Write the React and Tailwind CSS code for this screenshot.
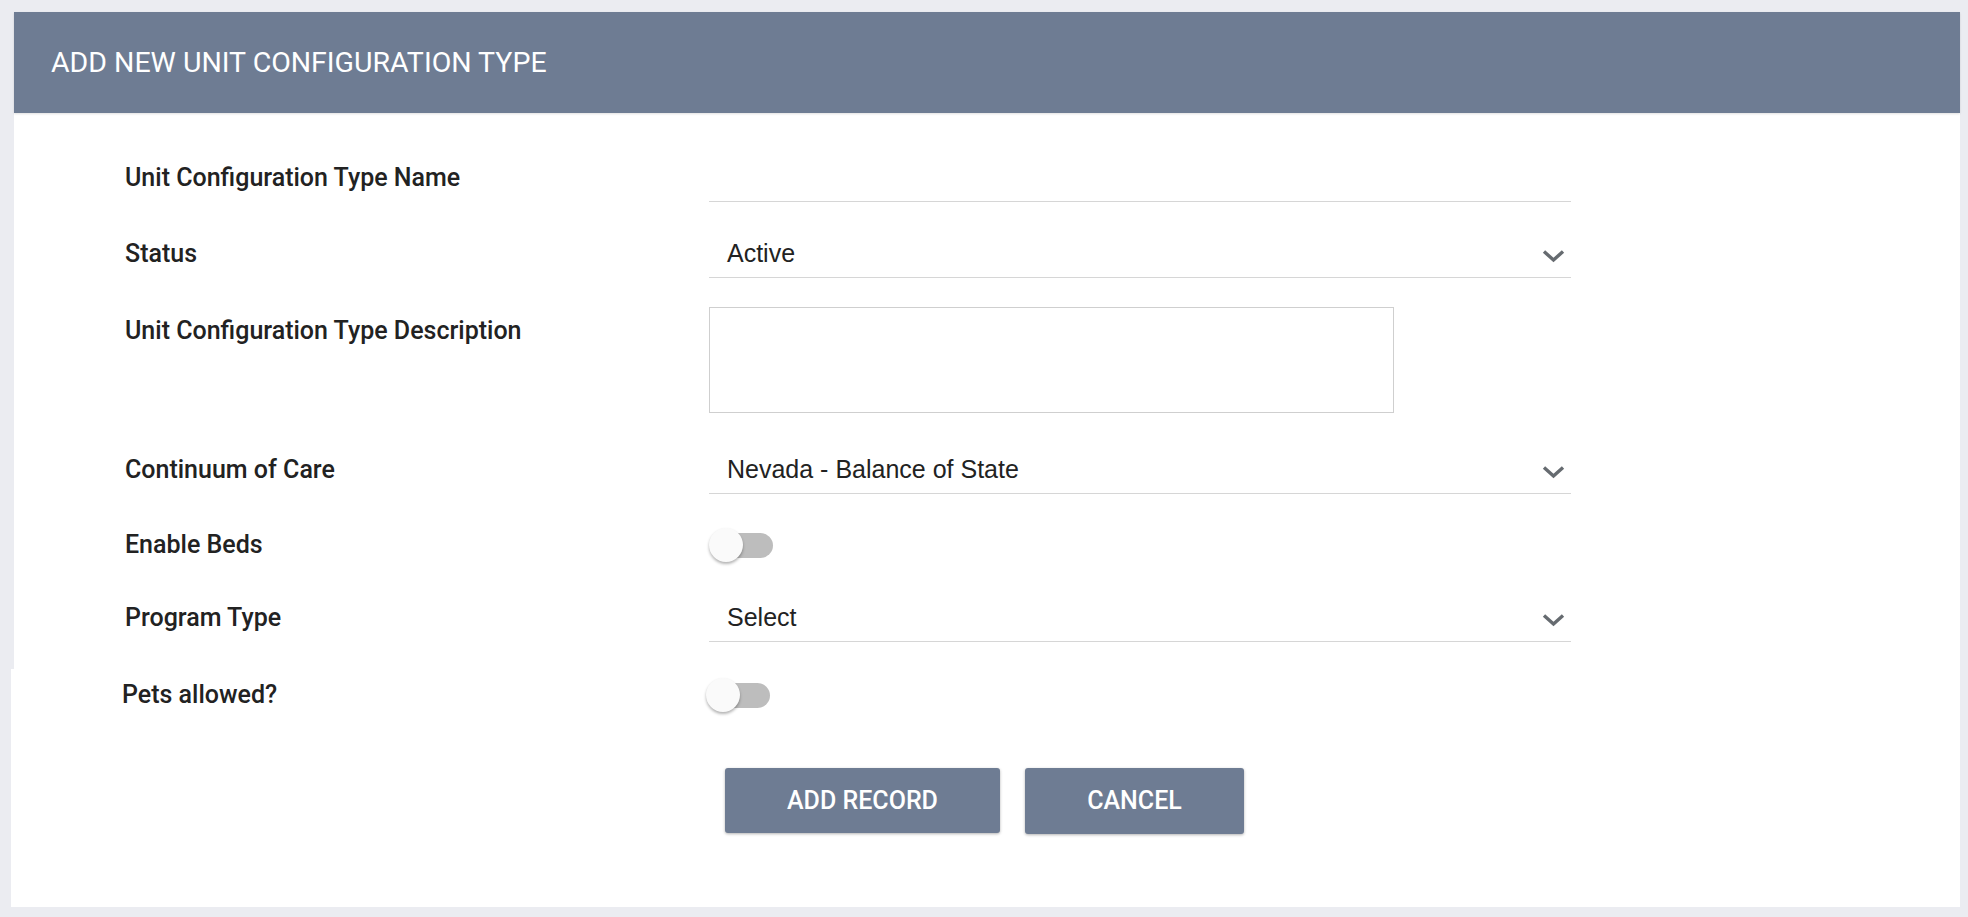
import React, { useState } from 'react';

const LABEL = "font-['Roboto',sans-serif] text-[25px] font-medium text-[#222222] leading-[30px]";
const VALUE = "font-['Liberation_Sans',Arial,sans-serif] text-[25px] text-[#222222] leading-[29px]";

const Chevron = () => (
  <svg width="23" height="14" viewBox="0 0 23 14" className="mt-[6px] shrink-0">
    <path d="M2 2.5 L11.5 11 L21 2.5" fill="none" stroke="#666b70" strokeWidth="3.4" />
  </svg>
);

const SelectField = ({ value }) => (
  <div className="h-[49px] w-[862px] border-b border-[#d6d6d6] flex items-center justify-between pl-[18px] pr-[6px]">
    <span className={VALUE}>{value}</span>
    <Chevron />
  </div>
);

const Toggle = ({ on, onChange }) => (
  <button type="button" onClick={onChange} className="relative w-[64px] h-[36px] block">
    <span className={`absolute left-[14px] top-[5.5px] w-[50px] h-[25px] rounded-full ${on ? 'bg-[#9aa6ba]' : 'bg-[#bdbdbd]'}`} />
    <span
      className={`absolute top-[1px] w-[34px] h-[34px] rounded-full bg-[#fafafa] shadow-[0_2px_3px_rgba(0,0,0,0.3)] transition-all ${
        on ? 'left-[30px]' : 'left-0'
      }`}
    />
  </button>
);

const Row = ({ label, children, className = '', labelClass = '' }) => (
  <div className={`grid grid-cols-[695px_862px] ${className}`}>
    <div className={`pl-[111px] ${labelClass}`}>
      <span className={LABEL}>{label}</span>
    </div>
    <div>{children}</div>
  </div>
);

export default function App() {
  const [beds, setBeds] = useState(false);
  const [pets, setPets] = useState(false);

  return (
    <div className="min-h-screen bg-[#ebecf1] pt-[12px] pb-[11px]">
      <div className="ml-[14px] mr-[8px] bg-white">
        <div className="h-[101px] bg-[#6e7c93] flex items-center pl-[37px] shadow-[0_1px_2px_rgba(0,0,0,0.12)]">
          <h1 className="font-['Roboto',sans-serif] text-[28.5px] text-white leading-none pt-[1px]">
            ADD NEW UNIT CONFIGURATION TYPE
          </h1>
        </div>

        <div className="pt-[40px] pb-[27px]">
          <Row label="Unit Configuration Type Name" className="items-center">
            <div className="h-[49px] w-[862px] border-b border-[#d6d6d6]" />
          </Row>

          <Row label="Status" className="items-center mt-[27px]">
            <SelectField value="Active" />
          </Row>

          <Row label="Unit Configuration Type Description" className="items-start mt-[29px]" labelClass="pt-[9px]">
            <div className="w-[685px] h-[106px] border border-[#cfcfcf]" />
          </Row>

          <Row label="Continuum of Care" className="items-center mt-[32px]">
            <SelectField value="Nevada - Balance of State" />
          </Row>

          <Row label="Enable Beds" className="items-center mt-[27px]">
            <div className="h-[48px] flex items-center">
              <Toggle on={beds} onChange={() => setBeds(!beds)} />
            </div>
          </Row>

          <Row label="Program Type" className="items-center mt-[24px]">
            <SelectField value="Select" />
          </Row>
        </div>
      </div>

      <div className="ml-[11px] mr-[8px] bg-white pt-[2px] pb-[73px]">
        <Row label="Pets allowed?" className="items-center">
          <div className="h-[48px] flex items-center">
            <Toggle on={pets} onChange={() => setPets(!pets)} />
          </div>
        </Row>

        <div className="flex gap-[25px] pl-[714px] mt-[49px]">
          <button
            type="button"
            className="w-[275px] h-[65px] bg-[#6e7c93] rounded-[3px] shadow-[0_1px_3px_rgba(0,0,0,0.3)] text-white font-['Roboto',sans-serif] font-medium text-[25px]"
          >
            ADD RECORD
          </button>
          <button
            type="button"
            className="w-[219px] h-[66px] bg-[#6e7c93] rounded-[3px] shadow-[0_1px_3px_rgba(0,0,0,0.3)] text-white font-['Roboto',sans-serif] font-medium text-[25px]"
          >
            CANCEL
          </button>
        </div>
      </div>
    </div>
  );
}
